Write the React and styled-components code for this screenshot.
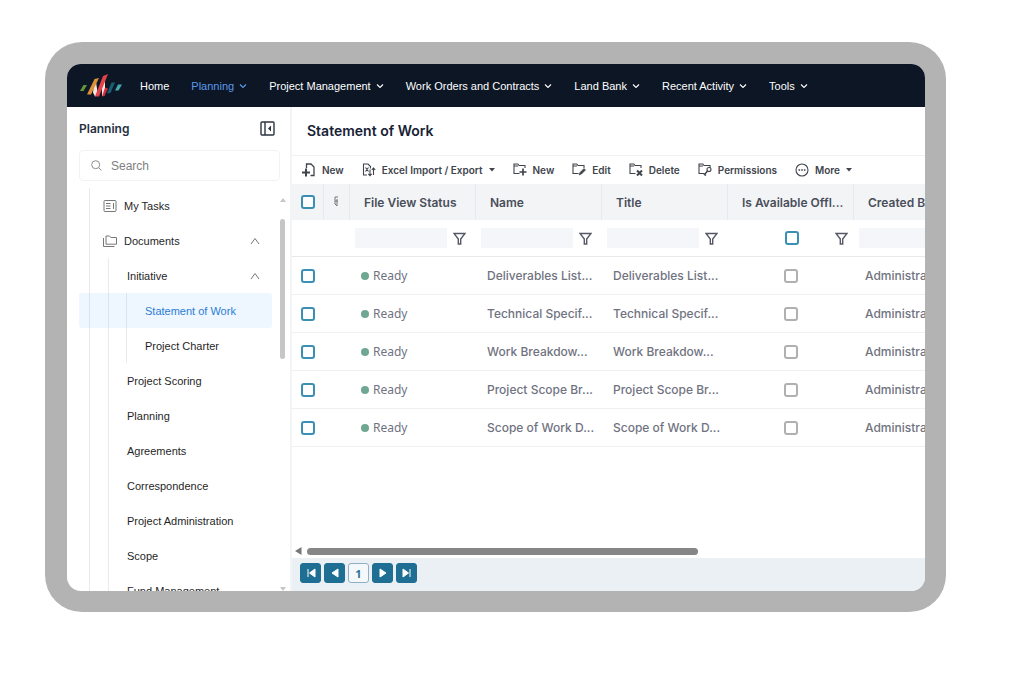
import React from 'react';
import styled, { createGlobalStyle } from 'styled-components';

const COLORS = {
    navy: '#0c1625',
    link: '#5b9bea',
    teal: '#1f6f94',
    check: '#3a8fb3',
    header: '#f2f4f6',
    line: '#eef0f2',
    text: '#4a4e5a',
    muted: '#70737f',
};

const GlobalStyle = createGlobalStyle`
    * {
        box-sizing: border-box;
    }
    body {
        margin: 0;
        background: #ffffff;
        font-family: Inter, sans-serif;
    }
    button, input {
        font: inherit;
    }
`;

const Page = styled.div`
    display: flex;
    height: 100vh;
    padding: 42px 78px 77px 45px;
`;

const Device = styled.div`
    flex: 1;
    min-width: 0;
    display: flex;
    padding: 22px 21px 21px 22px;
    border-radius: 37px;
    background: #b3b3b3;
`;

const Screen = styled.div`
    flex: 1;
    min-width: 0;
    display: flex;
    flex-direction: column;
    border-radius: 14px;
    overflow: hidden;
    background: #ffffff;
`;

const NavBar = styled.nav`
    display: flex;
    align-items: center;
    flex: none;
    gap: 22px;
    height: 43px;
    padding: 0 12px;
    background: ${COLORS.navy};
    font-family: 'Liberation Sans', sans-serif;
    font-size: 11px;
`;

const Logo = styled.svg`
    flex: none;
    width: 44px;
    height: 26px;
    margin-right: -5px;
`;

const NavLink = styled.a`
    display: flex;
    align-items: center;
    gap: 5px;
    color: ${({ $active }) => ($active ? COLORS.link : '#ffffff')};
    text-decoration: none;
    white-space: nowrap;
`;

const Body = styled.div`
    flex: 1;
    min-height: 0;
    display: flex;
`;

const Sidebar = styled.aside`
    display: flex;
    flex-direction: column;
    flex: none;
    width: 225px;
    border-right: 2px solid #f3f4f6;
`;

const SidebarHead = styled.div`
    display: flex;
    align-items: center;
    justify-content: space-between;
    height: 43px;
    padding: 0 15px 0 12px;
    h2 {
        margin: 0;
        color: #26303f;
        font-size: 12px;
        font-weight: 600;
    }
`;

const IconButton = styled.button`
    display: flex;
    padding: 0;
    border: 0;
    background: none;
    color: #2c3442;
`;

const SearchBox = styled.label`
    display: flex;
    align-items: center;
    gap: 9px;
    flex: none;
    height: 31px;
    margin: 0 10px 0 12px;
    padding: 0 11px;
    border: 1px solid #f1f2f4;
    border-radius: 4px;
    color: #8d8d8d;
    input {
        flex: 1;
        min-width: 0;
        padding: 0;
        border: 0;
        outline: 0;
        background: none;
        color: #333333;
        font-family: 'Liberation Sans', sans-serif;
        font-size: 12px;
    }
    input::placeholder {
        color: #808080;
        opacity: 1;
    }
`;

const TreeArea = styled.div`
    display: flex;
    flex: 1;
    min-height: 0;
    padding-top: 7px;
    overflow: hidden;
`;

const Tree = styled.ul`
    flex: 1;
    height: max-content;
    margin: 0 0 0 22px;
    padding: 0;
    border-left: 1px solid #ebebeb;
    list-style: none;
    font-family: 'Liberation Sans', sans-serif;
    font-size: 11px;
    ul {
        margin: 0 0 0 18px;
        padding: 0;
        border-left: 1px solid #ebebeb;
        list-style: none;
    }
    ul ul {
        margin-left: 17px;
    }
`;

const TreeLink = styled.a`
    display: flex;
    align-items: center;
    gap: 7px;
    height: 35px;
    padding: 0 12px 0 ${({ $indent }) => $indent}px;
    color: #1f1f1f;
    text-decoration: none;
    white-space: nowrap;
    > svg {
        color: #777777;
    }
    > span {
        flex: 1;
    }
`;

const ActiveLink = styled(TreeLink)`
    margin-left: -48px;
    border-radius: 3px;
    background: rgba(64, 150, 255, 0.09);
    color: #2b7dd6;
`;

const SideScroll = styled.div`
    display: flex;
    flex-direction: column;
    align-items: center;
    justify-content: space-between;
    flex: none;
    width: 5px;
    margin: 0 5px 0 8px;
    padding-top: 10px;
`;

const SideThumb = styled.div`
    flex: 0 1 140px;
    width: 5px;
    margin: 17px 0 auto;
    border-radius: 3px;
    background: #c6c6c6;
`;

const ScrollArrow = styled.svg`
    flex: none;
    width: 6px;
    height: 4px;
    fill: #c6c6c6;
`;

const Main = styled.main`
    flex: 1;
    min-width: 0;
    display: flex;
    flex-direction: column;
`;

const Title = styled.h1`
    flex: none;
    margin: 0;
    padding: 0 15px;
    border-bottom: 1px solid ${COLORS.line};
    color: #172234;
    font-size: 14px;
    font-weight: 600;
    line-height: 48px;
`;

const Toolbar = styled.div`
    display: flex;
    align-items: center;
    flex: none;
    gap: 18px;
    height: 28px;
    padding: 0 10px;
`;

const ToolButton = styled.button`
    display: flex;
    align-items: center;
    gap: 6px;
    padding: 0;
    border: 0;
    background: none;
    color: #40444c;
    font-size: 10px;
    font-weight: 600;
    white-space: nowrap;
    svg {
        flex: none;
    }
`;

const TableArea = styled.div`
    flex: 1;
    min-height: 0;
    overflow: hidden;
`;

const Grid = styled.table`
    width: 688px;
    table-layout: fixed;
    border-collapse: separate;
    border-spacing: 0;
    text-align: left;
`;

const HeadCell = styled.th`
    height: 36px;
    padding: 0 0 0 14px;
    border-right: 1px solid #e7e9ec;
    background: ${COLORS.header};
    color: ${COLORS.text};
    font-size: 12px;
    font-weight: 600;
    white-space: nowrap;
`;

const IconHeadCell = styled(HeadCell)`
    padding: 0;
    text-align: center;
`;

const FilterCell = styled.td`
    height: 37px;
    padding: 0 10px 0 5px;
    border-bottom: 1px solid #e6e8ea;
`;

const FilterField = styled.div`
    display: flex;
    align-items: center;
    gap: 6px;
    color: #555866;
    svg {
        flex: none;
    }
    input[type='text'] {
        flex: 1;
        min-width: 0;
        height: 20px;
        padding: 0 4px;
        border: 0;
        background: #f5f6f9;
        font-size: 12px;
    }
`;

const FilterCheck = styled(FilterField)`
    gap: 36px;
    padding-left: 52px;
    input {
        flex: none;
    }
`;

const Cell = styled.td`
    height: 38px;
    padding: 0 0 0 11px;
    border-bottom: 1px solid ${COLORS.line};
    color: ${COLORS.muted};
    font-size: 12px;
    font-weight: 500;
    white-space: nowrap;
`;

const CheckCell = styled(Cell)`
    padding: 0;
    text-align: center;
`;

const Checkbox = styled.input.attrs({ type: 'checkbox' })`
    appearance: none;
    display: block;
    width: 14px;
    height: 14px;
    margin: 0 auto;
    border: 2px solid ${({ $plain }) => ($plain ? '#b0b0b0' : COLORS.check)};
    border-radius: 3px;
    background: #ffffff;
    ${FilterCheck} & {
        margin: 0;
    }
`;

const Status = styled.span`
    display: flex;
    align-items: center;
    gap: 4px;
    font-family: 'Noto Sans', sans-serif;
    font-weight: 400;
    &::before {
        content: '';
        width: 8px;
        height: 8px;
        border-radius: 50%;
        background: #70a793;
    }
`;

const BottomScroll = styled.div`
    display: flex;
    align-items: center;
    flex: none;
    gap: 5px;
    height: 14px;
    padding-left: 3px;
`;

const BottomThumb = styled.div`
    width: 62%;
    height: 7px;
    border-radius: 4px;
    background: #868686;
`;

const Pager = styled.div`
    display: flex;
    align-items: center;
    flex: none;
    gap: 3px;
    height: 33px;
    padding: 0 8px 3px;
    background: #ebf0f4;
`;

const PageButton = styled.button`
    display: flex;
    align-items: center;
    justify-content: center;
    width: 21px;
    height: 20px;
    padding: 0;
    border: 1px solid ${({ $current }) => ($current ? '#8fb0c4' : COLORS.teal)};
    border-radius: 3px;
    background: ${({ $current }) => ($current ? '#f4f8fb' : COLORS.teal)};
    color: ${({ $current }) => ($current ? '#2d6f96' : '#ffffff')};
    font-family: 'Open Sans', sans-serif;
    font-size: 11px;
    font-weight: 700;
`;

const Chevron = ({ up }) => (
    <svg width={up ? 10 : 8} height={up ? 8 : 6} viewBox="0 0 10 8" fill="none" stroke="currentColor" strokeWidth={up ? 1 : 1.5}>
        <path d={up ? 'M1 7l4-5.5L9 7' : 'M1 2l4 4 4-4'} />
    </svg>
);

const Caret = () => (
    <svg width="6" height="4" viewBox="0 0 6 4" fill="currentColor">
        <path d="M0 0h6L3 3.5z" />
    </svg>
);

const Funnel = () => (
    <svg width="13" height="13" viewBox="0 0 13 13" fill="none" stroke="currentColor" strokeWidth="1.4">
        <path d="M1 1.5h11L7.7 7v5H5.3V7z" />
    </svg>
);

const FOLDER = 'M12 5V2.5H6L4.8 1H1v9.5h5.5M1 3h4';

const ICONS = {
    newFile: (
        <>
            <path d="M4.5 5V1H9l3 3v8.5H8.5" strokeWidth="1.3" />
            <path d="M0 9.5h8M4 5.5v8" strokeWidth="2" />
        </>
    ),
    excel: (
        <>
            <path d="M5 12H1.5V1H6l2.5 2.5v2M3.5 4.5l3 4m0-4l-3 4" />
            <path d="M8 6.5v6M6.3 10.8L8 12.7l1.7-1.9M11.5 12V5M9.8 6.8L11.5 5l1.7 1.8" />
        </>
    ),
    add: (
        <>
            <path d={FOLDER} />
            <path d="M6.5 9h7M10 5.5v7" strokeWidth="1.7" />
        </>
    ),
    edit: (
        <>
            <path d={FOLDER} />
            <path d="M7 12l1-2.5 4-4 1.5 1.5-4 4z" fill="currentColor" strokeWidth="0.6" />
        </>
    ),
    remove: (
        <>
            <path d={FOLDER} />
            <path d="M8 7.5l5 5m0-5l-5 5" strokeWidth="2" />
        </>
    ),
    permissions: (
        <>
            <path d={FOLDER} />
            <circle cx="11" cy="6.5" r="2" />
            <path d="M9.5 8L6.5 11.5l1.5 1" strokeWidth="1.5" />
        </>
    ),
    more: (
        <>
            <circle cx="7" cy="7" r="6" />
            <path d="M3.5 7h1.6M6.2 7h1.6M8.9 7h1.6" strokeWidth="1.6" />
        </>
    ),
};

const ToolIcon = ({ name }) => (
    <svg width="14" height="14" viewBox="0 0 14 14" fill="none" stroke="currentColor" strokeWidth="1.1">
        {ICONS[name]}
    </svg>
);

const TasksIcon = () => (
    <svg width="14" height="14" viewBox="0 0 14 14" fill="none" stroke="currentColor">
        <rect x="1" y="1.5" width="12" height="11" rx="1" />
        <path d="M3 4.5h4.5M3 7h4.5M3 9.5h4.5M10.5 4v6" />
    </svg>
);

const FoldersIcon = () => (
    <svg width="14" height="14" viewBox="0 0 14 14" fill="none" stroke="currentColor">
        <path d="M3 2h3.5l1.3 1.5h5.7v6.7H3zM.5 4v8.5h11" />
    </svg>
);

const navItems = ['Home', 'Planning', 'Project Management', 'Work Orders and Contracts', 'Land Bank', 'Recent Activity', 'Tools'];

const tools = [
    ['newFile', 'New'],
    ['excel', 'Excel Import / Export', true],
    ['add', 'New'],
    ['edit', 'Edit'],
    ['remove', 'Delete'],
    ['permissions', 'Permissions'],
    ['more', 'More', true],
];

const folders = ['Project Scoring', 'Planning', 'Agreements', 'Correspondence', 'Project Administration', 'Scope', 'Fund Management'];

const rows = ['Deliverables List...', 'Technical Specif...', 'Work Breakdow...', 'Project Scope Br...', 'Scope of Work D...'];

const pages = [
    ['First page', 'M2 1v8M9 1L3.5 5 9 9z'],
    ['Previous page', 'M8 1L2 5l6 4z'],
    ['1', null],
    ['Next page', 'M2 1l6 4-6 4z'],
    ['Last page', 'M8 1v8M1 1l5.5 4L1 9z'],
];

const Navigation = () => (
    <NavBar>
        <Logo viewBox="0 0 44 26">
            <path d="M1 18l3.500-6h3.500l-3.500 6z" fill="#66963c" />
            <path d="M15 10l2-1 2 13-3 1.500-2-4z" fill="#f3e6dc" />
            <path d="M8 21.500L15.500 6l4.500-1-8 16.500z" fill="#dc9138" />
            <path d="M23 9l3-1v14l-3 1z" fill="#f3e6e4" />
            <path d="M16 23.500L24 3l5-2-9 22.500z" fill="#e34248" />
            <path d="M23 23.500l3-9 3 1-3.500 7.500z" fill="#cf2f3d" />
            <path d="M28 20.500L32.500 9.500h3.500L31.500 20z" fill="#175f74" />
            <path d="M36 17.500l3-6h4l-3.500 6z" fill="#45a8ac" />
        </Logo>
        {navItems.map((item, i) => (
            <NavLink key={item} href="#" $active={i === 1}>
                {item}
                {i > 0 && <Chevron />}
            </NavLink>
        ))}
    </NavBar>
);

const SideMenu = () => (
    <Sidebar>
        <SidebarHead>
            <h2>Planning</h2>
            <IconButton aria-label="Collapse sidebar">
                <svg width="15" height="15" viewBox="0 0 15 15" fill="none" stroke="currentColor" strokeWidth="1.4">
                    <rect x="1" y="1" width="13" height="13" rx="1" />
                    <path d="M5 1v13" />
                    <path d="M11 4.5v6l-3-3z" fill="currentColor" stroke="none" />
                </svg>
            </IconButton>
        </SidebarHead>
        <SearchBox>
            <svg width="11" height="11" viewBox="0 0 11 11" fill="none" stroke="currentColor">
                <circle cx="4.7" cy="4.7" r="4" />
                <path d="M7.6 7.6l2.9 2.9" />
            </svg>
            <input type="text" placeholder="Search" aria-label="Search" />
        </SearchBox>
        <TreeArea>
            <Tree>
                <li>
                    <TreeLink href="#" $indent={13}>
                        <TasksIcon />
                        <span>My Tasks</span>
                    </TreeLink>
                </li>
                <li>
                    <TreeLink href="#" $indent={13}>
                        <FoldersIcon />
                        <span>Documents</span>
                        <Chevron up />
                    </TreeLink>
                    <ul>
                        <li>
                            <TreeLink href="#" $indent={18}>
                                <span>Initiative</span>
                                <Chevron up />
                            </TreeLink>
                            <ul>
                                <li>
                                    <ActiveLink href="#" $indent={66}>Statement of Work</ActiveLink>
                                </li>
                                <li>
                                    <TreeLink href="#" $indent={18}>Project Charter</TreeLink>
                                </li>
                            </ul>
                        </li>
                        {folders.map((name) => (
                            <li key={name}>
                                <TreeLink href="#" $indent={18}>{name}</TreeLink>
                            </li>
                        ))}
                    </ul>
                </li>
            </Tree>
            <SideScroll>
                <ScrollArrow viewBox="0 0 6 4">
                    <path d="M0 4l3-4 3 4z" />
                </ScrollArrow>
                <SideThumb />
                <ScrollArrow viewBox="0 0 6 4">
                    <path d="M0 0h6L3 4z" />
                </ScrollArrow>
            </SideScroll>
        </TreeArea>
    </Sidebar>
);

const DocumentTable = () => (
    <Grid>
        <colgroup>
            <col style={{ width: 32 }} />
            <col style={{ width: 26 }} />
            <col span="5" />
        </colgroup>
        <thead>
            <tr>
                <IconHeadCell>
                    <Checkbox aria-label="Select all" />
                </IconHeadCell>
                <IconHeadCell aria-label="Attachment">
                    <svg width="5" height="11" viewBox="0 0 5 11" fill="none" stroke="#777777">
                        <path d="M4 1H1v7l2 2V3M1 5h3" />
                    </svg>
                </IconHeadCell>
                <HeadCell>File View Status</HeadCell>
                <HeadCell>Name</HeadCell>
                <HeadCell>Title</HeadCell>
                <HeadCell>Is Available Offl...</HeadCell>
                <HeadCell>Created By</HeadCell>
            </tr>
        </thead>
        <tbody>
            <tr>
                <FilterCell colSpan="2" />
                {['status', 'name', 'title'].map((name) => (
                    <FilterCell key={name}>
                        <FilterField>
                            <input type="text" aria-label={`Filter by ${name}`} />
                            <Funnel />
                        </FilterField>
                    </FilterCell>
                ))}
                <FilterCell>
                    <FilterCheck>
                        <Checkbox aria-label="Filter by offline" />
                        <Funnel />
                    </FilterCheck>
                </FilterCell>
                <FilterCell>
                    <FilterField>
                        <input type="text" aria-label="Filter by author" />
                        <Funnel />
                    </FilterField>
                </FilterCell>
            </tr>
            {rows.map((name) => (
                <tr key={name}>
                    <CheckCell>
                        <Checkbox aria-label={`Select ${name}`} />
                    </CheckCell>
                    <Cell />
                    <Cell>
                        <Status>Ready</Status>
                    </Cell>
                    <Cell>{name}</Cell>
                    <Cell>{name}</Cell>
                    <CheckCell>
                        <Checkbox $plain aria-label={`${name} offline`} />
                    </CheckCell>
                    <Cell>Administrator</Cell>
                </tr>
            ))}
        </tbody>
    </Grid>
);

const App = () => {
    return (
        <Page>
            <GlobalStyle />
            <Device>
                <Screen>
                    <Navigation />
                    <Body>
                        <SideMenu />
                        <Main>
                            <Title>Statement of Work</Title>
                            <Toolbar>
                                {tools.map(([icon, label, menu]) => (
                                    <ToolButton key={icon}>
                                        <ToolIcon name={icon} />
                                        {label}
                                        {menu && <Caret />}
                                    </ToolButton>
                                ))}
                            </Toolbar>
                            <TableArea>
                                <DocumentTable />
                            </TableArea>
                            <BottomScroll>
                                <svg width="7" height="8" viewBox="0 0 7 8" fill="#777777">
                                    <path d="M6.5 0v8L0 4z" />
                                </svg>
                                <BottomThumb />
                            </BottomScroll>
                            <Pager>
                                {pages.map(([label, path]) => (
                                    <PageButton key={label} aria-label={label} $current={!path}>
                                        {path ? (
                                            <svg width="10" height="10" viewBox="0 0 10 10" fill="currentColor" stroke="currentColor">
                                                <path d={path} />
                                            </svg>
                                        ) : (
                                            label
                                        )}
                                    </PageButton>
                                ))}
                            </Pager>
                        </Main>
                    </Body>
                </Screen>
            </Device>
        </Page>
    );
};

export default App;
